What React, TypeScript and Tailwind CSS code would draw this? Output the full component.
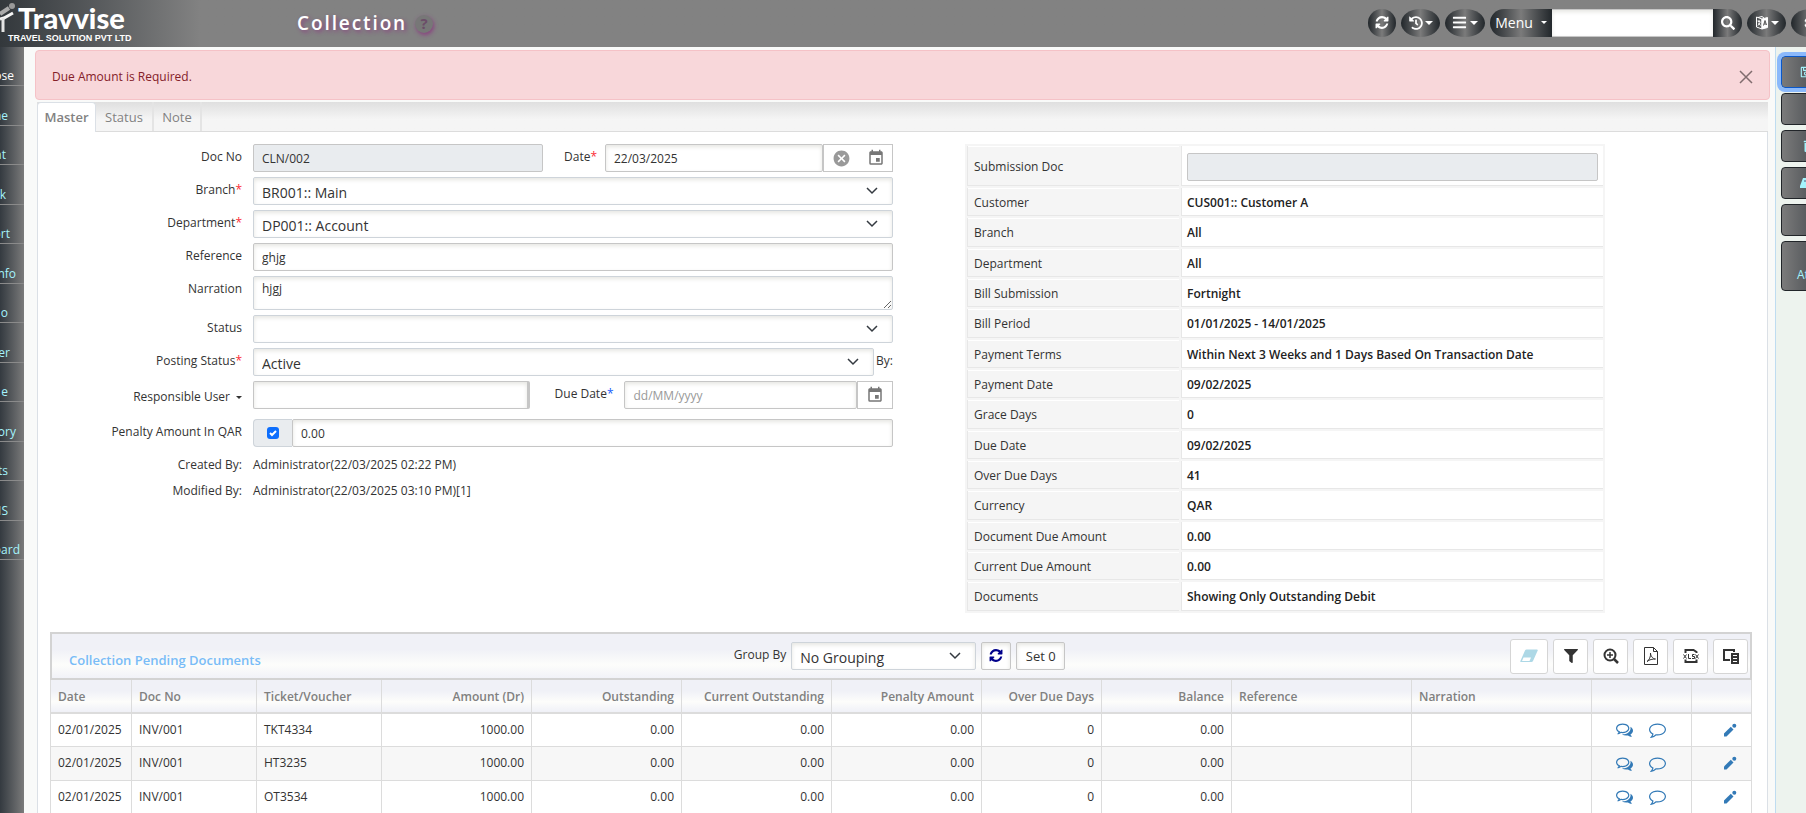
import React from 'react'
import { FaHistory, FaBars, FaSearch, FaFilter, FaRegSave, FaTrashAlt, FaCog } from 'react-icons/fa'
import { MdCancel, MdEvent } from 'react-icons/md'

//Data
const sideItems = [
	{ text: 'ose', pad: 'pr-[10px] text-white' },
	{ text: 'ne', pad: 'pr-4' },
	{ text: 'nt', pad: 'pr-[18px]' },
	{ text: 'k', pad: 'pr-[18px]' },
	{ text: 'ort', pad: 'pr-[14px]' },
	{ text: 'nfo', pad: 'pr-2' },
	{ text: 'o', pad: 'pr-4' },
	{ text: 'er', pad: 'pr-[14px]' },
	{ text: 'e', pad: 'pr-4' },
	{ text: 'ory', pad: 'pr-2' },
	{ text: 'ts', pad: 'pr-4' },
	{ text: 'IS', pad: 'pr-4' },
	{ text: 'oard', pad: 'pr-1' },
]

const details = [
	['Customer', 'CUS001:: Customer A'],
	['Branch', 'All'],
	['Department', 'All'],
	['Bill Submission', 'Fortnight'],
	['Bill Period', '01/01/2025 - 14/01/2025'],
	['Payment Terms', 'Within Next 3 Weeks and 1 Days Based On Transaction Date'],
	['Payment Date', '09/02/2025'],
	['Grace Days', '0'],
	['Due Date', '09/02/2025'],
	['Over Due Days', '41'],
	['Currency', 'QAR'],
	['Document Due Amount', '0.00'],
	['Current Due Amount', '0.00'],
	['Documents', 'Showing Only Outstanding Debit'],
]

const columns = [
	{ name: 'Date', size: 81 },
	{ name: 'Doc No', size: 125 },
	{ name: 'Ticket/Voucher', size: 125 },
	{ name: 'Amount (Dr)', size: 150, right: true },
	{ name: 'Outstanding', size: 150, right: true },
	{ name: 'Current Outstanding', size: 150, right: true },
	{ name: 'Penalty Amount', size: 150, right: true },
	{ name: 'Over Due Days', size: 120, right: true },
	{ name: 'Balance', size: 130, right: true },
	{ name: 'Reference', size: 180 },
	{ name: 'Narration', size: 180 },
	{ name: '', size: 100 },
	{ name: '', size: 60 },
]
const totalSize = columns.reduce((sum, c) => sum + c.size, 0)

const rows = ['TKT4334', 'HT3235', 'OT3534'].map(ticket => [
	'02/01/2025', 'INV/001', ticket, '1000.00', '0.00', '0.00', '0.00', '0', '0.00', '', '',
])

//Shared classes
const box = 'h-7 min-w-0 rounded-xs border border-[#c6c6c6] bg-white px-2 text-[12px] text-[#333] shadow-[inset_0_2px_4px_#e6e6e2] outline-none placeholder:text-[#999]'
const dark = 'flex h-7 shrink-0 items-center justify-center bg-linear-to-r from-[#22272b] via-[#7b7b7b] to-[#22272b] text-white'
const addon = 'flex h-7 shrink-0 items-center justify-center border border-[#c6c6c6] bg-white text-[#777]'
const tool = 'flex h-[35px] w-[35px] items-center justify-center rounded-[3px] border border-[#d5d5d5] bg-white text-[#333]'

//Icons
const Refresh: React.FC<{ className?: string }> = ({ className }) => (
	<svg viewBox="0 0 1536 1664" fill="currentColor" className={className}>
		<path d="M1511 928q0 5-1 7-64 268-268 434.5t-478 166.5q-146 0-282.5-55t-243.5-157l-129 129q-19 19-45 19t-45-19-19-45v-448q0-26 19-45t45-19h448q26 0 45 19t19 45-19 45l-137 137q71 66 161 102t187 36q134 0 250-65t186-179q11-17 53-117 8-23 30-23h192q13 0 22.5 9.5t9.5 22.5zm25-800v448q0 26-19 45t-45 19h-448q-26 0-45-19t-19-45 19-45l138-138q-148-137-349-137-134 0-250 65t-186 179q-11 17-53 117-8 23-30 23h-199q-13 0-22.5-9.5t-9.5-22.5v-7q65-268 270-434.5t480-166.5q146 0 284 55.5t245 156.5l130-129q19-19 45-19t45 19 19 45z" />
	</svg>
)

const Comments = () => (
	<svg viewBox="0 0 1792 1792" fill="currentColor" className="size-[17px]">
		<path d="M704 384q-153 0-286 52t-211.5 141-78.5 191q0 82 53 158t149 132l97 56-35 84q34-20 62-39l44-31 53 10q78 14 153 14 153 0 286-52t211.5-141 78.5-191-78.5-191-211.5-141-286-52zm0-128q191 0 353.5 68.5t256.5 186.5 94 257-94 257-256.5 186.5-353.5 68.5q-86 0-176-16-124 88-278 128-36 9-86 16h-3q-11 0-20.5-8t-11.5-21q-1-3-1-6.5t.5-6.5 2-6l2.5-5 3.5-5.5 4-5 4.5-5 4-4.5q5-6 23-25t26-29.5 22.5-29 25-38.5 20.5-44q-124-72-195-177t-71-224q0-139 94-257t256.5-186.5 353.5-68.5zm822 1169q10 24 20.5 44t25 38.5 22.5 29 26 29.5 23 25q1 1 4 4.5t4.5 5 4 5 3.5 5.5l2.5 5 2 6 .5 6.5-1 6.5q-3 14-13 22t-22 7q-50-7-86-16-154-40-278-128-90 16-176 16-271 0-472-132 58 4 88 4 161 0 309-45t264-129q125-92 192-212t67-254q0-77-23-152 129 71 204 178t75 230q0 120-71 224.5t-195 176.5z" />
	</svg>
)

const Comment = () => (
	<svg viewBox="0 0 1792 1792" fill="currentColor" className="size-[17px]">
		<path d="M896 384q-204 0-381.5 69.5t-282 187.5-104.5 255q0 112 71.5 213.5t201.5 175.5l87 50-27 96q-24 91-70 172 152-63 275-171l43-38 57 6q69 8 130 8 204 0 381.5-69.5t282-187.5 104.5-255-104.5-255-282-187.5-381.5-69.5zm896 512q0 174-120 321.5t-326 233-450 85.5q-70 0-145-8-198 175-460 242-49 14-114 22h-5q-15 0-27-10.5t-16-27.5v-1q-3-4-.5-12t2-10 4.5-9.5l6-9 7-8.5 8-9q7-8 31-34.5t34.5-38 31-39.5 32.5-51 27-59 26-76q-157-89-247.5-220t-90.5-281q0-174 120-321.5t326-233 450-85.5 450 85.5 326 233 120 321.5z" />
	</svg>
)

const Pencil = () => (
	<svg viewBox="0 0 14 14" fill="currentColor" className="size-[14px]">
		<path d="M1 13.500v-3L7.800 3.700l2.700 2.700-7 7.100z" />
		<circle cx="11.300" cy="2.700" r="2" />
	</svg>
)

const Caret = () => <span className="border-x-4 border-t-4 border-x-transparent border-t-current" />

const SmallCaret = () => <span className="border-x-[3px] border-t-[3px] border-x-transparent border-t-current" />

const Translate = () => (
	<svg viewBox="0 0 14 14" className="size-[14px]" fill="none" stroke="currentColor">
		<path d="M7 3 1.500 1v10L7 13z" />
		<path d="M7 3l5.500-1.500v10L7 13z" fill="currentColor" />
		<path d="M2.500 5l3 1M4 4v2.500M3 9.500l2-3M3.500 7l2 2.500M3 1.500l4-1 2 1.500" />
		<path d="M8.500 9.500 10 4.500l1.500 4.500M9 8h2" stroke="#555" />
	</svg>
)

const Mark = () => (
	<svg viewBox="0 0 16 36" className="h-9 w-4 self-start" fill="none" strokeWidth="3">
		<path d="M0 14 9 8" stroke="#aaa" strokeWidth="4" />
		<circle cx="12" cy="6" r="3" fill="#999" />
		<path d="M0 19 4 18 13 13" stroke="#f4f4f4" />
		<path d="M3 18v14" stroke="#e3e3e3" />
	</svg>
)

//Form pieces
const Select: React.FC<{ id: string; value: string; className?: string }> = ({ id, value, className = 'flex-1' }) => (
	<div className={`relative h-7 ${className}`}>
		<select id={id} className="h-full w-full appearance-none rounded-xs border border-[#ced4da] bg-white px-2 pt-1 text-[14px] leading-5 text-[#333] shadow-[inset_0_2px_4px_#e6e6e2] outline-none">
			<option>{value}</option>
		</select>
		<svg viewBox="0 0 12 8" className="pointer-events-none absolute top-[10px] right-[15px] h-2 w-3" fill="none" stroke="#343a40" strokeWidth="1.500">
			<path d="M1 1l5 5 5-5" />
		</svg>
	</div>
)

const Field: React.FC<{ label: string; id: string; required?: boolean; className?: string; children: React.ReactNode }> = props => (
	<div className={`flex ${props.className ?? ''}`}>
		<label htmlFor={props.id} className="w-[215px] shrink-0 pt-[5px] pr-[11px] text-right leading-4">
			{props.label}{props.required && <span className="text-red-500">*</span>}
		</label>
		<div className="flex min-w-0 flex-1">{props.children}</div>
	</div>
)

const Header = () => (
	<header className="flex h-[47px] shrink-0 items-center overflow-hidden bg-linear-to-r from-[#33383c] to-[#828282] to-[200px]">
		<Mark />
		<div className="w-[281px] text-white">
			<div className="pl-[2px] font-[Lato] text-[29px] leading-[30px] font-black">Travvise</div>
			<div className="-ml-2 pb-[2px] font-['Liberation_Sans'] text-[9px] leading-[10px] font-bold">TRAVEL SOLUTION PVT LTD</div>
		</div>
		<h1 className="pb-[2px] text-[19px] leading-6 font-semibold tracking-widest text-white [text-shadow:2px_2px_4px_#8a3f80]">Collection</h1>
		<button aria-label="Help" className="ml-2 flex size-[18px] items-center justify-center rounded-full bg-[#777] text-[15px] font-bold text-[#6b4d68] shadow-[1px_2px_4px_#8a3f80]">?</button>
		<div className="-mr-6 mb-[2px] ml-auto flex gap-[5px] text-[14px]">
			<button aria-label="Refresh" className={`${dark} w-7 rounded-full`}><Refresh className="size-[14px]" /></button>
			<button aria-label="History" className={`${dark} w-[39px] gap-[2px] rounded-[50%]`}><FaHistory className="size-[14px]" /><Caret /></button>
			<button aria-label="List" className={`${dark} w-10 gap-[3px] rounded-[50%]`}><FaBars className="size-[15px]" /><Caret /></button>
			<div className="flex">
				<button className={`${dark} w-[62px] gap-2 rounded-l-full`}>Menu <SmallCaret /></button>
				<input aria-label="Search menu" className="h-7 w-[161px] border-y border-[#c6c6c6] bg-white px-2 text-[#333] shadow-[inset_0_2px_4px_#e6e6e2] outline-none" />
				<button aria-label="Search" className={`${dark} w-[29px] rounded-r-full`}><FaSearch className="size-[14px]" /></button>
			</div>
			<button aria-label="Language" className={`${dark} w-[39px] gap-[2px] rounded-[50%]`}><Translate /><Caret /></button>
			<button aria-label="Settings" className={`${dark} w-[39px] rounded-[50%]`}><FaCog className="size-[14px]" /></button>
		</div>
	</header>
)

const MasterForm = () => (
	<form className="flex flex-col gap-[5px]">
		<Field label="Doc No" id="docNo">
			<div className="flex min-w-0 flex-[290]">
				<input id="docNo" readOnly defaultValue="CLN/002" className={`${box} flex-1 bg-[#e9ecef]! shadow-none!`} />
			</div>
			<label htmlFor="date" className="w-[62px] shrink-0 pt-[5px] pr-2 text-right leading-4">Date<span className="text-red-500">*</span></label>
			<div className="flex min-w-0 flex-[288]">
				<input id="date" defaultValue="22/03/2025" className={`${box} flex-1`} />
				<div className={`${addon} w-[70px] gap-4`}>
					<button type="button" aria-label="Clear date"><MdCancel className="size-[19px] text-[#999]" /></button>
					<button type="button" aria-label="Pick date"><MdEvent className="size-[18px]" /></button>
				</div>
			</div>
		</Field>
		<Field label="Branch" id="branch" required><Select id="branch" value="BR001:: Main" /></Field>
		<Field label="Department" id="department" required><Select id="department" value="DP001:: Account" /></Field>
		<Field label="Reference" id="reference"><input id="reference" defaultValue="ghjg" className={`${box} flex-1`} /></Field>
		<Field label="Narration" id="narration">
			<textarea id="narration" defaultValue="hjgj" className={`${box} h-[34px]! flex-1 border-[#ced4da]! pt-1 leading-4`} />
		</Field>
		<Field label="Status" id="status"><Select id="status" value="" /></Field>
		<Field label="Posting Status" id="posting" required>
			<Select id="posting" value="Active" />
			<span className="w-[19px] pt-[5px] text-right leading-4">By:</span>
		</Field>
		<div className="flex">
			<div className="flex w-[215px] shrink-0 items-center justify-end pt-1 pr-[11px]">
				<button type="button" className="flex items-center gap-[6px]">Responsible User <SmallCaret /></button>
			</div>
			<div className="flex min-w-0 flex-1">
				<div className="flex min-w-0 flex-[278]">
					<input aria-label="Responsible User" className={`${box} flex-1 border-r-[3px]`} />
				</div>
				<label htmlFor="dueDate" className="w-[94px] shrink-0 pt-[5px] pr-[11px] text-right leading-4">Due Date<span className="text-blue-600">*</span></label>
				<div className="flex min-w-0 flex-[269]">
					<input id="dueDate" placeholder="dd/MM/yyyy" className={`${box} flex-1`} />
					<button type="button" aria-label="Pick due date" className={`${addon} w-9`}><MdEvent className="size-[18px]" /></button>
				</div>
			</div>
		</div>
		<Field label="Penalty Amount In QAR" id="penalty" className="mt-[5px]">
			<div className="flex h-7 w-[39px] items-center justify-center rounded-l-sm border border-r-0 border-[#ced4da] bg-[#e9ecef]">
				<span className="relative flex">
					<input type="checkbox" defaultChecked aria-label="Apply penalty" className="size-3 appearance-none rounded-[3px] bg-white ring-1 ring-[#aaa] ring-inset checked:bg-[#0d6efd] checked:ring-0" />
					<svg viewBox="0 0 12 12" className="pointer-events-none absolute inset-0" fill="none" stroke="#fff" strokeWidth="2"><path d="M3 6l2 2 4-4" /></svg>
				</span>
			</div>
			<input id="penalty" defaultValue="0.00" className={`${box} flex-1`} />
		</Field>
		<dl className="grid grid-cols-[215px_1fr] gap-y-[10px] pt-[5px] leading-4">
			<dt className="pr-[11px] text-right">Created By:</dt><dd>Administrator(22/03/2025 02:22 PM)</dd>
			<dt className="pr-[11px] text-right">Modified By:</dt><dd>Administrator(22/03/2025 03:10 PM)[1]</dd>
		</dl>
	</form>
)

const DetailTable = () => {
	const head = 'w-[212px] border-b border-l border-[#e7e7e7] bg-[#f5f5f5] pt-[2px] pl-[6px] text-left font-normal shadow-[inset_0_1px_#fff]'
	const cell = 'border-b border-l border-[#e7e7e7] bg-white px-[5px] pt-[2px] font-semibold text-[#222]'
	return (
		<table className="w-full table-fixed border-separate border-spacing-[2px] self-start bg-[#f5f5f5]">
			<tbody>
				<tr className="h-10">
					<th className={head}><label htmlFor="submission">Submission Doc</label></th>
					<td className={cell}><input id="submission" readOnly className={`${box} block w-full bg-[#e9ecef]! shadow-none!`} /></td>
				</tr>
				{details.map(([name, value]) => (
					<tr key={name} className="h-7 [&:nth-child(3n)]:h-[29px]">
						<th className={head}>{name}</th>
						<td className={cell}>{value}</td>
					</tr>
				))}
			</tbody>
		</table>
	)
}

const PendingGrid = () => {
	const bar = 'bg-linear-to-b from-[#f0f1f7] from-35% via-[#fdfdfb] via-70% to-[#f1f2f8]'
	return (
		<section className="mr-[15px] ml-3">
			<div className={`flex h-12 items-center border-2 border-[#d3d3d3] pr-[2px] pl-[17px] ${bar}`}>
				<h2 className="flex-1 pt-[10px] text-[13px] font-semibold text-[#79bcf7]">Collection Pending Documents</h2>
				<div className="flex items-center gap-[5px] pr-[18px]">
					<label htmlFor="groupBy" className="pb-[2px]">Group By</label>
					<Select id="groupBy" value="No Grouping" className="w-[185px]" />
					<button aria-label="Reload" className={`${box} flex w-[30px] items-center justify-center px-0! text-[#00008b]!`}><Refresh className="size-[14px]" /></button>
					<button className={`${box} w-[49px] px-0! pt-[2px] text-[13px]!`}>Set 0</button>
				</div>
				<div className="flex flex-1 justify-end gap-[5px]">
					<button aria-label="Clear" className={`${tool} w-[38px]!`}>
						<svg viewBox="0 0 18 14" className="h-[14px] w-[18px]"><path d="M6.500.5h10.500q1.200 0 .7 1L13 12q-.5 1-1.500 1H1q-1 0-.6-1L5 1.500q.5-1 1.500-1z" fill="#add8e6" /><path d="M3.500 8.500h7.500l-1.500 3.500H2z" fill="#fff" /></svg>
					</button>
					<button aria-label="Filter" className={tool}><FaFilter className="size-[14px]" /></button>
					<button aria-label="Zoom in" className={tool}>
						<svg viewBox="0 0 16 16" className="size-4" fill="none" stroke="currentColor" strokeWidth="2"><circle cx="7" cy="7" r="5.500" /><path d="M7 4v6M4 7h6" strokeWidth="1.500" /><path d="M11 11l4 4" strokeWidth="2.500" /></svg>
					</button>
					<button aria-label="Export PDF" className={tool}>
						<svg viewBox="0 0 16 18" className="h-[18px] w-4" fill="none" stroke="currentColor">
							<path d="M1.500.5h9l4 4v13h-13zM10.500.5v4h4" />
							<path d="M4 14.500c2-1 4-5 3.500-8.500 0 3 2.500 6 5 6-3 0-6 .5-8.500 2.500z" />
						</svg>
					</button>
					<button aria-label="Export Excel" className={tool}>
						<svg viewBox="0 0 16 16" className="size-4" fill="none" stroke="currentColor" strokeWidth="2">
							<path d="M2.500 5V2h8l3 2v1M2.500 11.500V14h11v-2.500" />
							<path d="M.5 6.500l3 4M3.500 6.500l-3 4M5.500 6v4.500H8M11.500 6.500h-2v2h2v2h-2.500M12.500 6.500l3 4M15.500 6.500l-3 4" strokeWidth="1" />
						</svg>
					</button>
					<button aria-label="Column chooser" className={tool}>
						<svg viewBox="0 0 18 18" className="size-[18px]" fill="none" stroke="currentColor" strokeWidth="2">
							<path d="M8 13H2V3h10v2" />
							<path d="M9 6h8v11H9z" fill="currentColor" stroke="none" />
							<path d="M11 8.500h4M11 11.500h4M11 14.500h4" stroke="#fff" strokeWidth="1" />
						</svg>
					</button>
				</div>
			</div>
			<table className="w-full table-fixed border-collapse border border-t-0 border-[#dcdcdc]">
				<colgroup>
					{columns.map((c, i) => <col key={i} style={{ width: `${c.size / totalSize * 100}%` }} />)}
				</colgroup>
				<thead>
					<tr className={`h-[33px] border-b-2 border-[#dcdcdc] ${bar}`}>
						{columns.map((c, i) => (
							<th key={i} className={`border-x border-[#dcdcdc] px-[7px] pt-[2px] text-[12px] font-semibold text-[#808080] ${c.right ? 'text-right' : 'text-left'}`}>{c.name}</th>
						))}
					</tr>
				</thead>
				<tbody>
					{rows.map((row, i) => (
						<tr key={i} className="h-[33px] border-b border-[#dcdcdc] even:h-[34px] even:bg-[#f7f7f7]">
							{row.map((value, j) => (
								<td key={j} className={`border-x border-[#dcdcdc] px-[7px] ${columns[j].right ? 'text-right' : ''}`}>{value}</td>
							))}
							<td className="border-x border-[#dcdcdc] text-[#337ab7]">
								<div className="flex justify-center gap-4">
									<button aria-label="Comments"><Comments /></button>
									<button aria-label="Add comment"><Comment /></button>
								</div>
							</td>
							<td className="border-x border-[#dcdcdc] pr-[14px] text-[#337ab7]">
								<div className="flex justify-end"><button aria-label="Edit"><Pencil /></button></div>
							</td>
						</tr>
					))}
				</tbody>
			</table>
		</section>
	)
}

const App: React.FC = () => {
	const action = 'flex h-8 w-14 shrink-0 items-center rounded-[4px] border border-[#212529] bg-linear-to-r from-[#7b7b7b] to-[#343a40] text-[#a5f3fc]'
	return (
		<div className="flex h-screen flex-col overflow-hidden bg-[#f9faf9] font-['Open_Sans',sans-serif] text-[12px] text-[#333]">
			<Header />
			<div className="flex min-h-0 flex-1">
				<nav className="w-6 shrink-0 overflow-hidden bg-linear-to-r from-[#343a40] to-[#7b7b7b]">
					{sideItems.map(item => (
						<a key={item.text} href="#" className={`flex h-[39px] items-end justify-end border-b border-[#8a8a8a] text-[#a5f3fc] even:h-10 ${item.pad}`}>{item.text}</a>
					))}
				</nav>

				<main className="flex min-w-0 flex-1 flex-col pt-[3px] pr-[5px] pl-[11px]">
					<div role="alert" className="flex h-[50px] shrink-0 items-center justify-between rounded-[4px] border border-[#f5c2c7] bg-[#f8d7da] px-4 pt-[3px] text-[#842029]">
						Due Amount is Required.
						<button aria-label="Close">
							<svg viewBox="0 0 14 14" className="size-[14px]" stroke="#806c6e" strokeWidth="1.500"><path d="M1 1l12 12M13 1L1 13" /></svg>
						</button>
					</div>

					<div className="mx-[2px] mt-[2px] flex flex-1 flex-col">
						<div role="tablist" className="flex h-[30px] shrink-0 border-b border-[#dcdcdc] bg-linear-to-b from-[#dfdfdf] to-[#f5f5f5] to-60% text-[13px] text-[#828282]">
							<button role="tab" aria-selected="true" className="-mb-px w-[59px] rounded-t-[4px] border border-b-0 border-[#dbe0e6] bg-white pt-px font-semibold">Master</button>
							<button role="tab" aria-selected="false" className="w-[58px] border-r-2 border-[#e4e4e4] pt-[2px]">Status</button>
							<button role="tab" aria-selected="false" className="w-12 border-r-2 border-[#e4e4e4] pt-[2px]">Note</button>
						</div>
						<div className="flex flex-1 flex-col border-x border-[#dbe0e6] bg-white">
							<div className="mb-[19px] grid grid-cols-[855fr_72fr_640fr_162fr] pt-3">
								<MasterForm />
								<div />
								<DetailTable />
							</div>
							<PendingGrid />
						</div>
					</div>
				</main>

				<aside className="flex w-[31px] shrink-0 flex-col gap-[5px] overflow-hidden border-l border-[#bfdcf0] bg-[#edf3ee] pt-[9px] pl-[5px]">
					<button aria-label="Save" className={`${action} border-[#0a58ca]! pl-[18px] ring-4 ring-[#8bb9fb]`}><FaRegSave className="size-3" /></button>
					<button aria-label="New" className={action} />
					<button aria-label="Delete" className={`${action} pl-[21px]`}><FaTrashAlt className="size-3" /></button>
					<button aria-label="Print" className={`${action} pl-[18px]`}>
						<svg viewBox="0 0 12 12" className="size-3" fill="currentColor"><path d="M3 1h9v10H0V9z" /><path d="M4 4h6" stroke="#557" /></svg>
					</button>
					<button aria-label="More" className={action} />
					<button className={`${action} h-[50px]! items-end! pb-[6px] pl-[15px]`}>Att</button>
				</aside>
			</div>
		</div>
	)
}

export default App
